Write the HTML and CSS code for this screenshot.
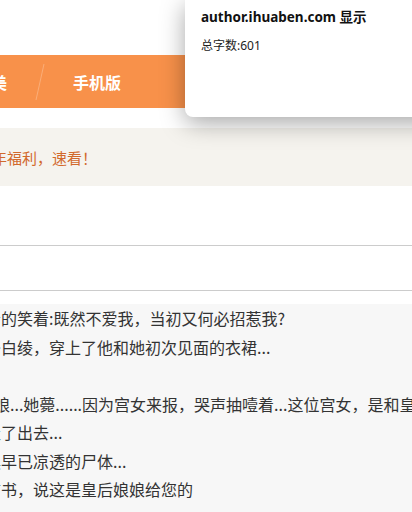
FILE: index.html
```html
<!DOCTYPE html>
<html lang="zh-CN">
  <head>
    <meta charset="UTF-8" />
    <meta name="viewport" content="width=device-width, initial-scale=1.0" />
    <title>作品</title>
    <link rel="stylesheet" href="styles.css">
  </head>

  <body>
    <div class="top"></div>
    <div class="nav">
      <div class="nav-inner">
        <span class="nav-item">美</span>
        <svg class="nav-slash" width="10" height="53" viewBox="0 0 10 53">
          <line x1="9" y1="9" x2="1" y2="45" stroke="#ffffff" stroke-opacity="0.25" stroke-width="1" />
        </svg>
        <span class="nav-item">手机版</span>
      </div>
    </div>

    <div class="notice">
      <span class="notice-text">年福利，速看！</span>
    </div>

    <div class="count-box"></div>

    <div class="content">
      <p>冷冷的笑着:既然不爱我，当初又何必招惹我?</p>
      <p>一条白绫，穿上了他和她初次见面的衣裙...</p>
      <p class="blank"></p>
      <p class="shift">娘娘...她薨......因为宫女来报，哭声抽噎着...这位宫女，是和皇</p>
      <p>身走了出去...</p>
      <p>那具早已凉透的尸体...</p>
      <p>封信书，说这是皇后娘娘给您的</p>
    </div>

    <div class="alert">
      <div class="alert-title">author.ihuaben.com 显示</div>
      <div class="alert-msg">总字数:601</div>
    </div>
  </body>
</html>
```

FILE: styles.css
```css
body {
  margin: 0;
  background-color: #ffffff;
  font-family: "Noto Sans CJK SC", "Noto Sans", sans-serif;
  overflow: hidden;
  height: 512px;
}

.top {
  height: 55px;
}

.nav {
  height: 53px;
  background-color: #f8914a;
  overflow: hidden;
}

.nav-inner {
  display: flex;
  align-items: center;
  gap: 28px;
  height: 100%;
  margin-left: -9px;
}

.nav-item {
  color: #ffffff;
  font-size: 16px;
  font-weight: bold;
  white-space: nowrap;
}

.nav-slash {
  display: block;
}

.notice {
  margin-top: 20px;
  height: 58px;
  background-color: #f5f3ee;
  display: flex;
  align-items: center;
  overflow: hidden;
}

.notice-text {
  margin-left: -8px;
  color: #d2692c;
  font-size: 15px;
  white-space: nowrap;
}

.count-box {
  margin-top: 59px;
  height: 44px;
  border-top: 1px solid #cccccc;
  border-bottom: 1px solid #cccccc;
}

.content {
  margin-top: 13px;
  background-color: #f7f7f7;
  padding-bottom: 40px;
  overflow: hidden;
}

.content p {
  margin: 0 0 0 -31px;
  font-size: 16px;
  line-height: 28.5px;
  color: #333333;
  white-space: nowrap;
}

.content p.blank {
  height: 28.5px;
}

.content p.shift {
  margin-left: -22px;
}

/* browser alert lying over the page */
.alert {
  position: absolute;
  top: 0;
  left: 185px;
  width: 260px;
  height: 117px;
  background-color: #ffffff;
  border-radius: 0 0 8px 8px;
  box-shadow: 0 6px 24px rgba(0, 0, 0, 0.35);
  padding: 9px 16px;
  box-sizing: border-box;
  font-family: "Noto Sans", "Noto Sans CJK SC", sans-serif;
}

.alert-title {
  font-size: 13.5px;
  font-weight: bold;
  color: #111111;
  line-height: 16px;
}

.alert-msg {
  margin-top: 13px;
  font-size: 12px;
  color: #222222;
  line-height: 16px;
}
```
